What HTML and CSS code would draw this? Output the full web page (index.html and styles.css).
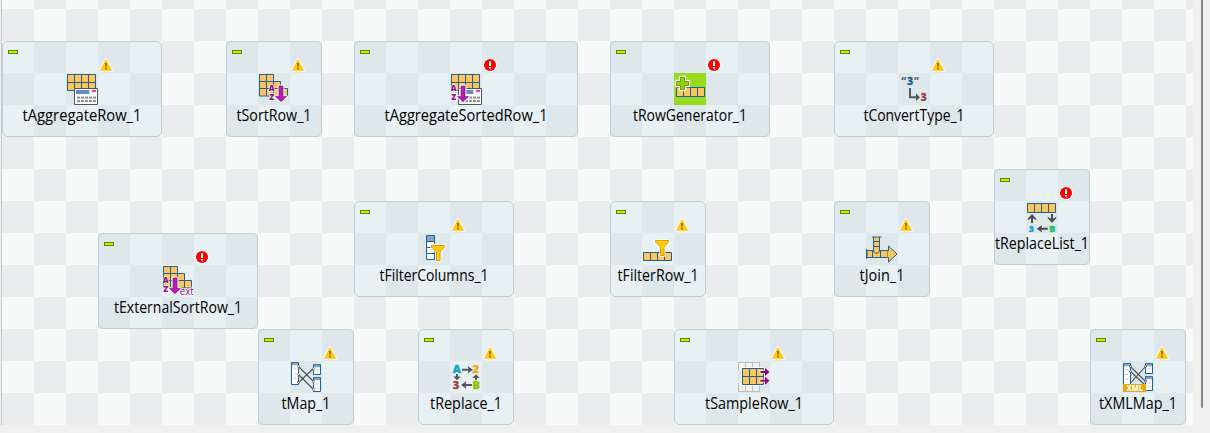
FILE: index.html
```html
<!DOCTYPE html>
<html lang="en">
<head>
<meta charset="utf-8">
<title>Job designer</title>
<link rel="stylesheet" href="styles.css">
</head>
<body>
<svg class="defs" width="0" height="0" aria-hidden="true">
  <symbol id="warn" viewBox="0 0 16 16"><path d="M8 2.6 2.6 13.3h10.8z" class="halo"/><path d="M8 2.8 2.7 13.3h10.6z" class="warn"/><path d="M8 6v3.6M8 10.6v1.8" stroke="#a06400" stroke-width="1.8"/></symbol>
  <symbol id="err" viewBox="0 0 16 16"><circle cx="8" cy="8" r="7" fill="#fff" opacity=".8"/><circle cx="8" cy="8" r="6" fill="#fa0000"/><path d="M8 4.3v4.6M8 9.9v1.9" stroke="#fff" stroke-width="2"/></symbol>
  <symbol id="grid4x2" viewBox="0 0 32 32"><path class="cell" d="M1.5 1.5h28v16h-28zM8.5 1.5v16M15.5 1.5v16M22.5 1.5v16M1.5 9.5h28"/></symbol>
  <symbol id="row4" viewBox="0 0 32 12"><path class="cell" d="M1.5 1.5h28v9h-28zM8.5 1.5v9M15.5 1.5v9M22.5 1.5v9"/></symbol>
  <symbol id="steps" viewBox="0 0 32 32"><path class="cell" d="M1.5 1.5h14v7h7v7h7v7.5h-28zM8.5 1.5V23M15.5 8.5V23M22.5 15.5V23M1.5 8.5h14M1.5 15.5h21"/></symbol>
  <symbol id="az" viewBox="0 0 32 32">
    <g class="az-text"><text x="0.8" y="18.4">A</text><text x="1.2" y="26.5">Z</text></g>
    <path class="halo" d="M11 13h4v10.5h3.5L13 28.7 7.500 23.500H11z"/><path class="purple" d="M11 13h4v10.500h3.500L13 28.700 7.500 23.500H11z"/>
  </symbol>
  <symbol id="calc" viewBox="0 0 32 32">
    <path d="M8.500 15.500h23v16h-23z" fill="#fff" stroke="#4e5560"/><path d="M10 17h13.300v4H10z" fill="#6789c4"/><path d="M26 17h4v2h-4z" fill="#e3535b"/>
    <path d="M11 24.700h19M11 28.200h19" stroke="#969696" stroke-width="2.200" stroke-dasharray="3 1"/>
  </symbol>
  <symbol id="funnel" viewBox="0 0 16 18"><path class="halo" d="M1.500 1.500h13V3L10 8v8.500H6.500V8L1.500 3z"/><path d="M1.500 1.500h13V3L10 8v8.500H6.500V8L1.500 3z" fill="#ffcb05" stroke="#d9a012"/></symbol>
  <symbol id="arrow" viewBox="0 0 12 8"><path d="M0.500 4H8" stroke="currentColor" stroke-width="2"/><path d="M6.200 0.300 11.500 4 6.200 7.700 7 4z" fill="currentColor"/></symbol>

  <symbol id="i-aggregate" viewBox="0 0 32 32"><use href="#grid4x2"/><use href="#calc"/></symbol>
  <symbol id="i-sort" viewBox="0 0 32 32"><use href="#steps"/><use href="#az" x="10" width="32" height="32"/></symbol>
  <symbol id="i-aggsort" viewBox="0 0 32 32"><use href="#grid4x2"/><use href="#calc"/><use href="#az"/></symbol>
  <symbol id="i-extsort" viewBox="0 0 32 32"><use href="#steps"/><use href="#az"/><text class="ext" x="17.700" y="30.400" textLength="14" lengthAdjust="spacingAndGlyphs">ext</text></symbol>
  <symbol id="i-rowgen" viewBox="0 0 32 32"><path d="M0 0h32v32H0z" fill="#98da20"/><use href="#row4" x="1" y="13" width="32" height="12"/>
    <path d="M6.500 4.500h4v4h4v4h-4v4h-4v-4h-4v-4h4z" class="halo wide"/><path d="M6.500 4.500h4v4h4v4h-4v4h-4v-4h-4v-4h4z" fill="#98cc06" stroke="#719b0b"/></symbol>
  <symbol id="i-convert" viewBox="0 0 32 32"><g class="glyph"><text x="3.200" y="12.300" fill="#596474">“</text><text x="9.300" y="11.800" fill="#236092" stroke="#236092">3</text><text x="16" y="12.300" fill="#596474">”</text><text x="22.700" y="27.700" fill="#9b4147" stroke="#9b4147">3</text></g>
    <path d="M12 15v9.300h7" fill="none" stroke="#515863" stroke-width="2"/><path d="M18 20.500 22 24.300 18 28z" fill="#515863"/></symbol>
  <symbol id="i-replacelist" viewBox="0 0 32 32"><use href="#row4" y="1" width="32" height="12"/>
    <g class="dark"><path d="M6 22v-7M26 13v7" stroke="currentColor" stroke-width="2"/><path d="M6 13l4.200 4.800v1.500L6 16.500 1.800 19.300v-1.500zM26 22l4.200-4.800v-1.500L26 18.500l-4.200-2.800v1.500z" fill="currentColor"/><use href="#arrow" width="12" height="8" transform="translate(22.300 31.700)rotate(180)"/></g>
    <g class="glyph small"><text x="2.800" y="31" fill="#1d9be0" stroke="#1d9be0">3</text><text x="23.300" y="31" fill="#22c06c" stroke="#22c06c">B</text></g></symbol>
  <symbol id="i-filtercols" viewBox="0 0 32 32"><path d="M8.500 2.500h8v24h-8z" fill="#fff"/><path d="M8.500 2.500h8v6h-8z" fill="#82a6c8"/><path class="line" d="M8.500 2.500h8v24h-8zM8.500 8.500h8M8.500 14.500h8M8.500 20.500h8"/><use href="#funnel" x="12" y="11" width="16" height="18"/></symbol>
  <symbol id="i-filterrow" viewBox="0 0 32 32"><path class="cell" d="M1.500 19.500h28v8h-28zM8.500 19.500v8M15.500 19.500v8M22.500 19.500v8"/><use href="#funnel" x="12" y="6" width="16" height="18"/></symbol>
  <symbol id="i-join" viewBox="0 0 32 32"><path class="cell" d="M1 17.500h21.500v-4.500L31 21l-8.500 8v-4.500H1z"/><path d="M8 4h5.500v14.500H8z" fill="#fbc55f"/><path class="line" d="M.500 16v10M6 4h9.500M7.500 4v14M13.500 4v14M7.500 8.500h6M7.500 13.500h6M7.500 18c1 3 5 3 6 0M6.500 18v6.500M14.500 18v6.500"/><path d="M21.500 18v6.500" stroke="#a98448"/></symbol>
  <symbol id="i-map" viewBox="0 0 32 32"><g class="sheet"><path d="M1.500 1.500h7v22h-7zM23.500 3.500h7v10h-7zM23.500 16.500h7v14h-7z"/></g><path d="M2 3h6M24 5h6M24 18h6" stroke="#7ba5c9" stroke-width="2.500"/><path d="M3 8h4M3 12.500h4M3 17h4M25 9h4M25 23h4M25 27h4" stroke="#ccd6df"/>
    <path d="M8.500 5.500l15 15M8.500 13.500l15 15M8.500 21.500l15-14" stroke="#4c5055" stroke-width="1.100"/>
    <g fill="#fff" stroke="#6b7178" stroke-width=".9"><circle cx="8.500" cy="5.500" r="1"/><circle cx="8.500" cy="13.500" r="1"/><circle cx="8.500" cy="21.500" r="1"/><circle cx="23.500" cy="7.500" r="1"/><circle cx="23.500" cy="20.500" r="1"/><circle cx="23.500" cy="28.500" r="1"/></g></symbol>
  <symbol id="i-replace" viewBox="0 0 32 32"><g class="glyph big"><text x="2.700" y="12.300" fill="#0ca5d0" stroke="#0ca5d0">A</text><text x="22.600" y="12.300" fill="#f7a40c" stroke="#f7a40c">2</text><text x="2.700" y="28" fill="#9b4147" stroke="#9b4147">3</text><text x="22.400" y="28" fill="#8fc000" stroke="#8fc000">B</text></g>
    <g class="slate"><use href="#arrow" x="11.500" y="4.800" width="12" height="8"/><use href="#arrow" width="12" height="8" transform="translate(22.500 28)rotate(180)"/><path d="M7 13v3M26 19v-3" stroke="currentColor" stroke-width="2"/><path d="M3.300 15.500h7.400L7 19.300zM22.300 17h7.400L26 13.300z" fill="currentColor"/></g></symbol>
  <symbol id="i-sample" viewBox="0 0 32 32"><path d="M.500 1.500h21v29H.500zM7.500 1.500v29M14.500 1.500v29" fill="#faefdf" stroke="#a9c1d9"/><path d="M0 9.500h3.500v12.500H0z" fill="#e3ebf0"/><path class="halo" d="M4.500 7.500h21v16h-21z"/><path class="cell" d="M4.500 7.500h21v16h-21zM11.500 7.500v16M18.500 7.500v16M4.500 15.500h21"/>
    <path d="M21.500 11H28M21.500 19.700H28" stroke="#fff" stroke-width="4" opacity=".65"/><path d="M22.500 11H28M22.500 19.700H28" stroke="#95007f" stroke-width="2"/><path d="M27 7l4.500 4L27 15zM27 15.700l4.500 4-4.500 4z" fill="#95007f"/></symbol>
  <symbol id="i-xmlmap" viewBox="0 0 32 32"><g class="sheet"><path d="M1.500 2.500h7v21h-7zM23.500 2.500h7v10h-7zM23.500 15.500h7v14h-7z"/></g><path d="M2 4h6M24 4h6M24 17h6" stroke="#7ba5c9" stroke-width="2.500"/><path d="M3 9h3M3 13.500h3M3 18h3M26 8h3M26 22h3M26 26h3" stroke="#bccbd8"/>
    <path d="M8.500 5.500l15 15M8.500 10.500l15 14M8.500 22l15-16.500" stroke="#4c5055" stroke-width="1.100"/>
    <g fill="#fff" stroke="#236092" stroke-width=".9"><circle cx="8.500" cy="5.500" r="1"/><circle cx="8.500" cy="10.500" r="1"/><circle cx="23.500" cy="5.500" r="1"/><circle cx="23.500" cy="20" r="1"/></g>
    <path d="M1 23h23v8H1z" fill="#e7a90d"/><text class="xml" x="4.500" y="30" textLength="16.500" lengthAdjust="spacingAndGlyphs">XML</text></symbol>
</svg>
<main class="editor">
  <div class="canvas" id="canvas"></div>
  <div class="scroll"><div class="thumb"></div></div>
</main>
<script src="nodes.js"></script>
</body>
</html>
```
FILE: styles.css
```css
body { margin: 0; background: #f0f0f0; font-family: "Open Sans", "Noto Sans", sans-serif; overflow: hidden; }
.defs { position: absolute; }
.editor { display: flex; width: 1210px; height: 433px; background: #f0f0f0; }
.canvas {
  position: relative;
  box-sizing: border-box;
  width: 1192px;
  height: 425px;
  border-left: 1px solid #c8c8c8;
  margin-left: 1px;
  background: repeating-conic-gradient(#f8faf9 0 25%, #ebecee 0 50%) 0 9px / 64px 64px;
}
.scroll { flex: 1; padding-left: 8px; }
.thumb { width: 2px; height: 408px; background: #858585; border-radius: 0 0 1px 1px; }
.node {
  position: absolute;
  box-sizing: border-box;
  height: 96px;
  border: 1px solid #bfced9;
  border-radius: 5px;
  background: rgba(192, 217, 224, 0.3);
}
.node svg { display: block; margin: -1px; }
.toggle { fill: #bff200; stroke: #5c8503; }
.label { font-size: 15.5px; fill: #000; text-anchor: middle; }
.cell { fill: #fbc55f; stroke: #236092; }
.line { fill: none; stroke: #236092; }
.sheet { fill: #fff; stroke: #236092; }
.halo { fill: #fff; stroke: #fff; stroke-width: 3px; stroke-linejoin: round; opacity: 0.75; }
.halo.wide { stroke-width: 3.5px; opacity: 0.85; }
.warn { fill: #ffcb05; stroke: #ffcb05; stroke-linejoin: round; }
.purple { fill: #b31eb0; stroke: #930c90; stroke-width: 0.6px; }
.az-text { font-size: 8px; font-weight: 800; fill: #8e0d87; stroke: #ffffffcc; stroke-width: 1.6px; paint-order: stroke; }
.ext { font-size: 10.5px; font-weight: 500; fill: #8e0d87; stroke: #ffffffcc; stroke-width: 1.5px; paint-order: stroke; }
.xml { font-size: 8px; font-weight: 800; fill: #fff; }
.glyph { font-size: 10px; font-weight: 800; stroke-width: 0.3px; }
.glyph.small { font-size: 9px; }
.glyph.big { font-size: 11px; }
.dark { color: #4b4b4d; }
.slate { color: #515863; }
```
FILE: nodes.js
```js
// name, icon, badge, x, y, width, label width
const nodes = [
  ["tAggregateRow_1", "aggregate", "warn", 2, 41, 160, 119],
  ["tSortRow_1", "sort", "warn", 226, 41, 96, 75],
  ["tAggregateSortedRow_1", "aggsort", "err", 354, 41, 224, 163],
  ["tRowGenerator_1", "rowgen", "err", 610, 41, 160, 114],
  ["tConvertType_1", "convert", "warn", 834, 41, 160, 101],
  ["tReplaceList_1", "replacelist", "err", 994, 169, 96, 94],
  ["tFilterColumns_1", "filtercols", "warn", 354, 201, 160, 109],
  ["tFilterRow_1", "filterrow", "warn", 610, 201, 96, 81],
  ["tJoin_1", "join", "warn", 834, 201, 96, 45],
  ["tExternalSortRow_1", "extsort", "err", 98, 233, 160, 128],
  ["tMap_1", "map", "warn", 258, 329, 96, 49],
  ["tReplace_1", "replace", "warn", 418, 329, 96, 72],
  ["tSampleRow_1", "sample", "warn", 674, 329, 160, 98],
  ["tXMLMap_1", "xmlmap", "warn", 1090, 329, 96, 78],
];
document.getElementById("canvas").innerHTML = nodes.map(([name, icon, badge, x, y, w, lw]) => {
  const c = w / 2;
  return `<div class="node" style="left:${x - 2}px;top:${y}px;width:${w}px">
    <svg width="${w}" height="96">
      <rect class="toggle" x="6.5" y="9.5" width="9" height="3"/>
      <use href="#i-${icon}" x="${c - 16}" y="32" width="32" height="32"/>
      <use href="#${badge}" x="${c + 16}" y="16" width="16" height="16"/>
      <text class="label" x="${c}" y="80.4" textLength="${lw}" lengthAdjust="spacingAndGlyphs">${name}</text>
    </svg></div>`;
}).join("");
```
